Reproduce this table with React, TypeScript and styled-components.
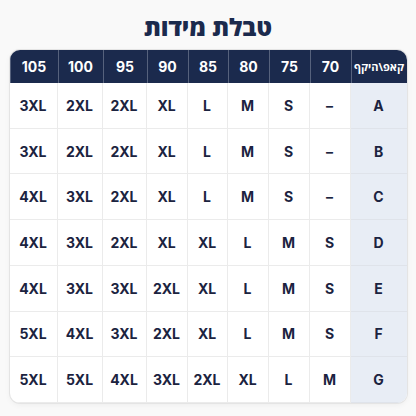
import React from 'react';
import styled, { createGlobalStyle } from 'styled-components';

const sizes = ['70', '75', '80', '85', '90', '95', '100', '105'];

const rows: { cup: string; values: string[] }[] = [
  { cup: 'A', values: ['–', 'S', 'M', 'L', 'XL', '2XL', '2XL', '3XL'] },
  { cup: 'B', values: ['–', 'S', 'M', 'L', 'XL', '2XL', '2XL', '3XL'] },
  { cup: 'C', values: ['–', 'S', 'M', 'L', 'XL', '2XL', '3XL', '4XL'] },
  { cup: 'D', values: ['S', 'M', 'L', 'XL', 'XL', '2XL', '3XL', '4XL'] },
  { cup: 'E', values: ['S', 'M', 'L', 'XL', '2XL', '3XL', '3XL', '4XL'] },
  { cup: 'F', values: ['S', 'M', 'L', 'XL', '2XL', '3XL', '4XL', '5XL'] },
  { cup: 'G', values: ['M', 'L', 'XL', '2XL', '3XL', '4XL', '5XL', '5XL'] },
];

const App: React.FC = () => {
  return (
    <Page>
      <GlobalStyle />
      <Title>טבלת מידות</Title>
      <Table dir="rtl">
        <HeadCell $first>קאפ\היקף</HeadCell>
        {sizes.map((s) => (
          <HeadCell key={s}>{s}</HeadCell>
        ))}
        {rows.map((row) => (
          <React.Fragment key={row.cup}>
            <CupCell>{row.cup}</CupCell>
            {row.values.map((v, i) => (
              <Cell key={i}>{v}</Cell>
            ))}
          </React.Fragment>
        ))}
      </Table>
    </Page>
  );
};

export default App;

const GlobalStyle = createGlobalStyle`
  body {
    margin: 0;
    background: #f9f9f9;
  }
`;

const Page = styled.div`
  width: 416px;
  height: 416px;
  display: flex;
  flex-direction: column;
  align-items: center;
  font-family: Inter, 'Open Sans', 'DejaVu Sans', sans-serif;
  color: #1b2340;
`;

const Title = styled.h1`
  margin: 12px 0 8px 0;
  height: 30px;
  line-height: 30px;
  font-family: 'Open Sans', 'DejaVu Sans', sans-serif;
  font-size: 24px;
  font-weight: 800;
  color: #1b2a4d;
`;

const Table = styled.div`
  width: 397px;
  height: 353px;
  display: grid;
  grid-template-columns: 56px 41px 41px 41px 40px 41px 44px 45px 48px;
  grid-template-rows: 33px repeat(7, 1fr);
  border-radius: 10px;
  overflow: hidden;
  background: #ffffff;
  box-shadow: 0 0 0 1px #e4e4e4, 0 2px 6px rgba(0, 0, 0, 0.05);
`;

const HeadCell = styled.div<{ $first?: boolean }>`
  display: flex;
  align-items: center;
  justify-content: center;
  background: #1b2a4d;
  color: #ffffff;
  font-size: ${({ $first }) => ($first ? '11px' : '14px')};
  font-weight: 700;
  font-family: ${({ $first }) =>
    $first ? "'Open Sans', 'DejaVu Sans', sans-serif" : 'Inter, sans-serif'};
  border-left: 1px solid #56627d;
`;

const CupCell = styled.div`
  display: flex;
  align-items: center;
  justify-content: center;
  background: #e8edf5;
  font-size: 14px;
  font-weight: 700;
  border-bottom: 1px solid #dfe3ea;
`;

const Cell = styled.div`
  display: flex;
  align-items: center;
  justify-content: center;
  font-size: 14px;
  font-weight: 700;
  border-bottom: 1px solid #ebebeb;
  border-right: 1px solid #ebebeb;
`;
